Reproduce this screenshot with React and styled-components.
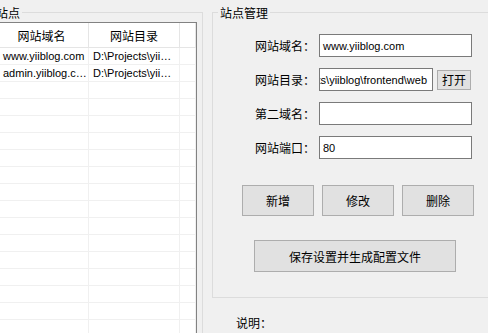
import React from "react";
import styled, { createGlobalStyle } from "styled-components";

const Global = createGlobalStyle`
  html, body { margin: 0; padding: 0; background: #f0f0f0; }
  body {
    font-family: "Noto Sans CJK SC", "Microsoft YaHei", sans-serif;
    font-size: 12px;
    color: #000;
  }
  * { box-sizing: border-box; }
`;

const valueFont = `
  font-family: "Liberation Sans", "Noto Sans CJK SC", sans-serif;
  font-size: 11px;
`;

const Window = styled.div`
  display: flex;
  align-items: flex-start;
  width: 488px;
  height: 333px;
  overflow: hidden;
`;

const Group = styled.div`
  position: relative;
  flex-shrink: 0;
  margin-top: 12px;
  border: 1px solid #dcdcdc;
`;

const GroupTitle = styled.span`
  position: absolute;
  top: -8px;
  left: 5px;
  padding: 0 2px;
  line-height: 16px;
  background: #f0f0f0;
  white-space: nowrap;
`;

const LeftGroup = styled(Group)`
  margin-left: -12px;
  width: 215px;
  height: 360px;
  padding: 9px 5px 0 5px;
`;

const List = styled.div`
  border: 1px solid #828282;
  background: #fff;
  height: 400px;
  overflow: hidden;
`;

const HeaderRow = styled.div`
  display: flex;
  height: 25px;
  border-bottom: 1px solid #e5e5e5;
`;

const HeaderCell = styled.div`
  flex: ${(p) => (p.$w ? `0 0 ${p.$w}px` : "1 1 auto")};
  border-right: 1px solid #e5e5e5;
  display: flex;
  align-items: center;
  justify-content: center;
  padding-top: 1px;
`;

const Row = styled.div`
  display: flex;
  height: 17px;
  border-bottom: 1px solid #f0f0f0;
`;

const Cell = styled.div`
  ${valueFont}
  flex: ${(p) => (p.$w ? `0 0 ${p.$w}px` : "1 1 auto")};
  border-right: 1px solid #f0f0f0;
  padding: 0 ${(p) => p.$pr || 1}px 0 ${(p) => p.$pl || 4}px;
  line-height: 16px;
  white-space: nowrap;
  overflow: hidden;
  text-overflow: ellipsis;
`;

const RightColumn = styled.div`
  display: flex;
  flex-direction: column;
  flex-shrink: 0;
  margin-left: 9px;
`;

const RightGroup = styled(Group)`
  width: 300px;
  height: 286px;
  padding: 21px 0 0 0;
  display: flex;
  flex-direction: column;
`;

const Form = styled.div`
  display: flex;
  flex-direction: column;
  gap: 11px;
  padding-left: 42px;
`;

const FormRow = styled.div`
  display: flex;
  align-items: center;
  height: 23px;
  gap: 4px;
`;

const Label = styled.span`
  width: 60px;
  white-space: nowrap;
  line-height: 16px;
`;

const Input = styled.div`
  ${valueFont}
  width: ${(p) => p.$w}px;
  height: 23px;
  border: 1px solid #7a7a7a;
  background: #fff;
  padding: 0 ${(p) => (p.$end ? 5 : 3)}px 0 3px;
  display: flex;
  align-items: center;
  justify-content: ${(p) => (p.$end ? "flex-end" : "flex-start")};
  overflow: hidden;
  white-space: nowrap;
  line-height: 16px;
`;

const Button = styled.button`
  font: inherit;
  color: #000;
  background: #e1e1e1;
  border: 1px solid #adadad;
  border-radius: 0;
  padding: 0;
  margin: 0;
  width: ${(p) => p.$w}px;
  height: ${(p) => p.$h}px;
  display: flex;
  align-items: center;
  justify-content: center;
  flex-shrink: 0;
`;

const ActionRow = styled.div`
  display: flex;
  gap: 8px;
  margin-top: 26px;
  padding-left: 29px;
`;

const SaveRow = styled.div`
  display: flex;
  margin-top: 24px;
  padding-left: 41px;
`;

const Note = styled.div`
  margin: 17px 0 0 24px;
  line-height: 16px;
`;

const sites = [
  { domain: "www.yiiblog.com", dir: "D:\\Projects\\yiiblog\\frontend\\web" },
  { domain: "admin.yiiblog.com", dir: "D:\\Projects\\yiiblog\\backend\\web" },
];

export default function App() {
  const rows = [...sites, ...Array.from({ length: 18 }, () => null)];
  return (
    <>
      <Global />
      <Window>
        <LeftGroup>
          <GroupTitle>站点</GroupTitle>
          <List>
            <HeaderRow>
              <HeaderCell $w={94}>网站域名</HeaderCell>
              <HeaderCell $w={91}>网站目录</HeaderCell>
              <HeaderCell />
            </HeaderRow>
            {rows.map((r, i) => (
              <Row key={i}>
                <Cell $w={94} $pl={8}>{r ? r.domain : ""}</Cell>
                <Cell $w={91} $pr={7}>{r ? r.dir : ""}</Cell>
                <Cell />
              </Row>
            ))}
          </List>
        </LeftGroup>
        <RightColumn>
          <RightGroup>
            <GroupTitle>站点管理</GroupTitle>
            <Form>
              <FormRow>
                <Label>网站域名：</Label>
                <Input $w={153}>www.yiiblog.com</Input>
              </FormRow>
              <FormRow>
                <Label>网站目录：</Label>
                <Input $w={114} $end>D:\Projects\yiiblog\frontend\web</Input>
                <Button $w={34} $h={20}>打开</Button>
              </FormRow>
              <FormRow>
                <Label>第二域名：</Label>
                <Input $w={153} />
              </FormRow>
              <FormRow>
                <Label>网站端口：</Label>
                <Input $w={153}>80</Input>
              </FormRow>
            </Form>
            <ActionRow>
              <Button $w={72} $h={31}>新增</Button>
              <Button $w={72} $h={31}>修改</Button>
              <Button $w={72} $h={31}>删除</Button>
            </ActionRow>
            <SaveRow>
              <Button $w={202} $h={32}>保存设置并生成配置文件</Button>
            </SaveRow>
          </RightGroup>
          <Note>说明：</Note>
        </RightColumn>
      </Window>
    </>
  );
}
